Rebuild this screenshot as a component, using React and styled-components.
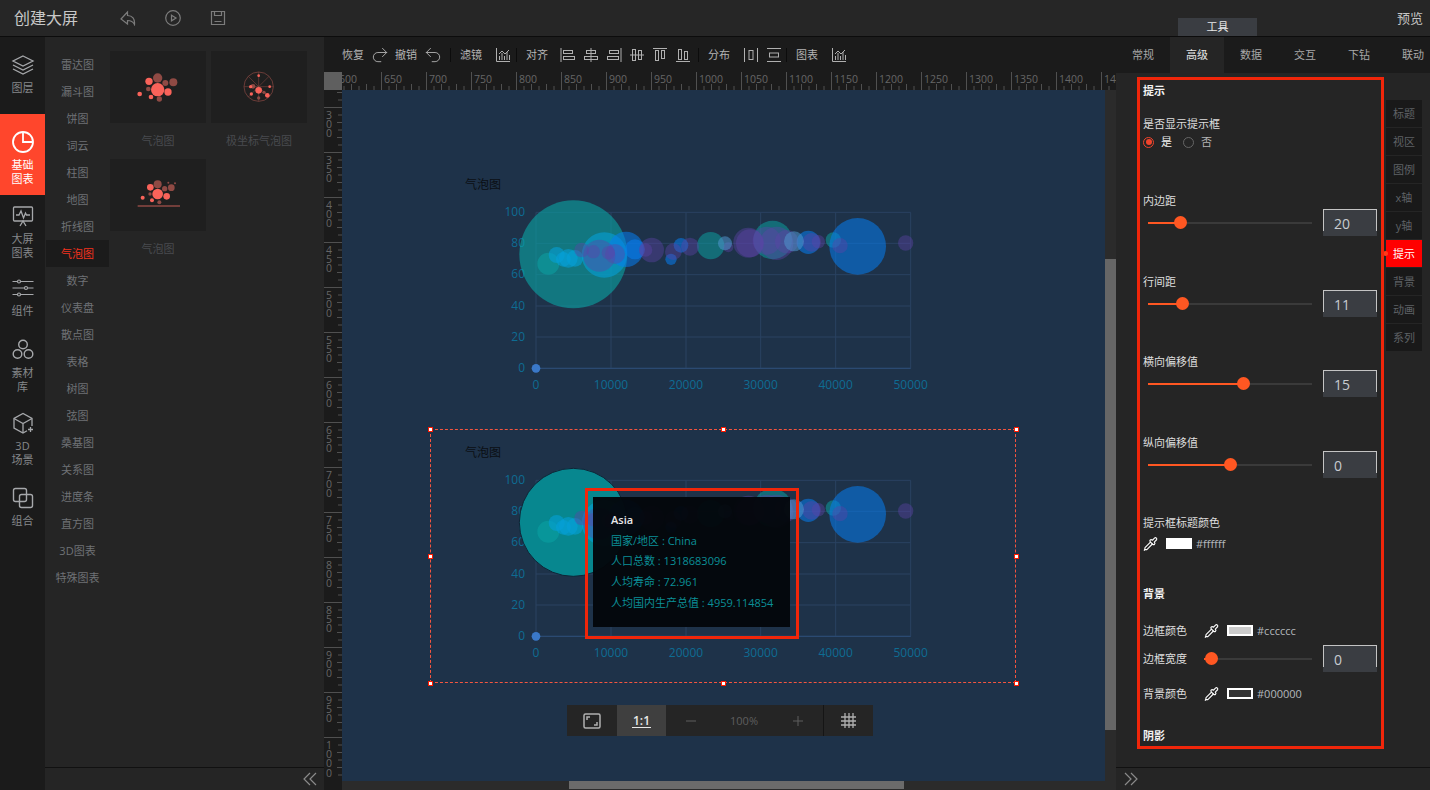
import React from 'react';
import styled, { createGlobalStyle } from 'styled-components';
import { Pipette, Undo2, Redo2 } from 'lucide-react';

const GlobalStyle = createGlobalStyle`
    html, body {
        margin: 0;
        height: 100%;
        overflow: hidden;
        background: #252525;
        font-family: "Open Sans", "Noto Sans CJK SC", sans-serif;
    }
    #root { height: 100%; }
    * { box-sizing: border-box; }
`;

const Page = styled.div`
    display: flex;
    flex-direction: column;
    width: 1430px;
    height: 790px;
    background: #252525;
`;

const TopBar = styled.header`
    display: flex;
    align-items: center;
    height: 37px;
    flex-shrink: 0;
    padding: 0 7px 0 14px;
    background: #262626;
    border-bottom: 1px solid #0c0c0c;
`;

const AppTitle = styled.div`
    font-size: 16px;
    line-height: 22px;
    width: 64px;
    color: #c8c8c8;
`;

const TopIcons = styled.div`
    display: flex;
    gap: 29px;
    margin-left: 42px;
    color: #7c7c7c;
`;

const ToolTab = styled.div`
    align-self: flex-end;
    width: 79px;
    height: 18px;
    margin-left: auto;
    font-size: 11px;
    line-height: 18px;
    text-align: center;
    color: #e8e8e8;
    background: #3a3d42;
`;

const Preview = styled.div`
    width: 26px;
    margin-left: 140px;
    font-size: 13px;
    line-height: 18px;
    color: #c4c4c4;
`;

const Main = styled.div`
    display: flex;
    flex: 1;
    min-height: 0;
`;

const Nav = styled.nav`
    width: 45px;
    flex-shrink: 0;
    background: #1b1b1b;
`;

const NavItem = styled.div`
    display: flex;
    flex-direction: column;
    align-items: center;
    gap: 4px;
    padding: ${p => p.$pad};
    font-size: 11px;
    line-height: 14px;
    text-align: center;
    color: ${p => (p.$active ? '#ffffff' : '#85878a')};
    background: ${p => (p.$active ? '#ff462c' : 'transparent')};
    svg { color: ${p => (p.$active ? '#ffffff' : '#a6a8ab')}; }
`;

const Library = styled.aside`
    display: flex;
    flex-direction: column;
    width: 279px;
    flex-shrink: 0;
`;

const LibraryBody = styled.div`
    display: flex;
    flex: 1;
    min-height: 0;
`;

const TypeList = styled.div`
    width: 64px;
    padding: 14px 0 0 1px;
`;

const TypeItem = styled.div`
    height: 27px;
    font-size: 11px;
    line-height: 27px;
    text-align: center;
    color: ${p => (p.$active ? '#f5321e' : '#6f7276')};
    background: ${p => (p.$active ? '#1b1b1b' : 'transparent')};
`;

const ChartGrid = styled.div`
    display: grid;
    grid-template-columns: 96px 96px;
    grid-auto-rows: 108px;
    column-gap: 5px;
    padding: 14px 0 0 1px;
`;

const ChartThumb = styled.div`
    svg {
        display: block;
        width: 96px;
        height: 72px;
        background: #1f1f1f;
    }
`;

const ThumbLabel = styled.div`
    font-size: 11px;
    line-height: 36px;
    text-align: center;
    color: #494b4f;
`;

const FootBar = styled.div`
    display: flex;
    align-items: center;
    justify-content: ${p => (p.$right ? 'flex-start' : 'flex-end')};
    height: 23px;
    flex-shrink: 0;
    padding: ${p => (p.$right ? '0 0 0 8px' : '0 7px 0 0')};
    color: #8a8a8a;
    border-top: 1px solid #111111;
`;

const Workspace = styled.main`
    display: flex;
    flex-direction: column;
    width: 792px;
    flex-shrink: 0;
    background: #1b1b1b;
`;

const Toolbar = styled.div`
    display: flex;
    align-items: center;
    gap: 8px;
    height: 35px;
    padding-left: 18px;
    color: #b0b0b0;
`;

const ToolText = styled.span`
    margin-left: ${p => p.$ml || 0}px;
    font-size: 11px;
    line-height: 14px;
    white-space: nowrap;
    color: #b4b4b4;
`;

const ToolIcon = styled.span`
    display: flex;
    align-items: center;
    justify-content: center;
    width: 15px;
    height: 16px;
    margin-left: ${p => p.$ml || 0}px;
    svg { display: block; flex-shrink: 0; }
`;

const ToolSep = styled.span`
    width: 1px;
    height: 14px;
    margin-left: ${p => p.$ml || 0}px;
    background: #0c0c0c;
`;

const RulerRow = styled.div`
    display: flex;
    height: 18px;
    flex-shrink: 0;
`;

const RulerCorner = styled.div`
    position: relative;
    z-index: 1;
    width: 18px;
    flex-shrink: 0;
    background: #5f5f5f;
`;

const CanvasRow = styled.div`
    display: flex;
    flex: 1;
    min-height: 0;
`;

const RulerSvg = styled.svg`
    display: block;
    flex-shrink: 0;
    background: #1b1b1b;
    text {
        font-size: 10.5px;
        fill: #666666;
    }
`;

const SideLabel = styled.text`
    writing-mode: vertical-rl;
    text-orientation: upright;
    letter-spacing: -4.8px;
`;

const Canvas = styled.div`
    position: relative;
    flex: 1;
    overflow: hidden;
    background: #1e3249;
`;

const ScrollTrackV = styled.div`
    width: 11px;
    flex-shrink: 0;
    padding-top: 169px;
    background: #2b2b2b;
`;

const ScrollThumbV = styled.div`
    height: 471px;
    background: #666666;
`;

const ScrollTrackH = styled.div`
    height: 9px;
    flex-shrink: 0;
    margin-left: 18px;
    padding-left: 227px;
    background: #2b2b2b;
`;

const ScrollThumbH = styled.div`
    width: 335px;
    height: 8px;
    background: #6b6b6b;
`;

const Widget = styled.div`
    position: absolute;
    left: 88px;
    top: ${p => p.$top}px;
    width: 586px;
    height: 254px;
    padding: 19px 0 0 35px;
`;

const WidgetTitle = styled.div`
    height: 10px;
    font-size: 12px;
    line-height: 10px;
    color: #0b0f14;
`;

const ChartSvg = styled.svg`
    display: block;
    width: 440px;
    height: 210px;
    margin-left: 35px;
    overflow: visible;
    text {
        font-size: 36px;
        fill: #0e6c93;
    }
`;

const SelectBox = styled.div`
    position: absolute;
    inset: 0;
    border: 1px dashed #f4553f;
`;

const Handle = styled.span`
    position: absolute;
    left: ${p => p.$x};
    top: ${p => p.$y};
    width: 5px;
    height: 5px;
    margin: -2px 0 0 -2px;
    background: #ffffff;
    border: 1.5px solid #ff1a00;
`;

const Tooltip = styled.div`
    position: absolute;
    left: 163px;
    top: 68px;
    width: 197px;
    height: 130px;
    padding: 13px 0 0 18px;
    background: rgba(3, 6, 10, 0.96);
`;

const TipTitle = styled.div`
    font-size: 11px;
    font-weight: 600;
    line-height: 20.7px;
    color: #e8e8e8;
`;

const TipLine = styled.div`
    font-size: 11px;
    line-height: 20.7px;
    white-space: nowrap;
    color: #0b8f97;
`;

const RedFrame = styled.div`
    position: absolute;
    left: ${p => p.$x}px;
    top: ${p => p.$y}px;
    width: ${p => p.$w}px;
    height: ${p => p.$h}px;
    border: 3px solid #f0260a;
    pointer-events: none;
`;

const ZoomBar = styled.div`
    position: absolute;
    left: 225px;
    top: 615px;
    display: flex;
    align-items: center;
    width: 306px;
    height: 31px;
    font-size: 11px;
    color: #5e5e5e;
    background: #252525;
`;

const ZoomCell = styled.div`
    display: flex;
    align-items: center;
    justify-content: center;
    width: ${p => p.$w}px;
    height: 31px;
    flex-shrink: 0;
    color: ${p => (p.$on ? '#e8e8e8' : p.$dim ? '#5e5e5e' : '#b0b0b0')};
    background: ${p => (p.$on ? '#3f3f3f' : 'transparent')};
    border-left: ${p => (p.$sep ? '1px solid #151515' : 'none')};
`;

const OneToOne = styled.span`
    font-size: 12px;
    font-weight: 600;
    line-height: 13px;
    border-bottom: 1px solid #e8e8e8;
    padding: 0 1px;
`;

const Panel = styled.section`
    position: relative;
    display: flex;
    flex-direction: column;
    flex: 1;
    min-width: 0;
`;

const Tabs = styled.div`
    display: flex;
    height: 36px;
    flex-shrink: 0;
    background: #1b1b1b;
`;

const Tab = styled.div`
    width: 54px;
    font-size: 11px;
    line-height: 36px;
    text-align: center;
    flex-shrink: 0;
    color: ${p => (p.$active ? '#e6e6e6' : '#a8a8a8')};
    background: ${p => (p.$active ? '#252525' : 'transparent')};
`;

const PanelBody = styled.div`
    display: flex;
    flex: 1;
    min-height: 0;
`;

const Form = styled.div`
    width: 270px;
    flex-shrink: 0;
    padding: 11px 0 0 27px;
    overflow: hidden;
`;

const Heading = styled.div`
    margin-top: ${p => p.$top || 0}px;
    font-size: 11px;
    font-weight: 700;
    line-height: 14px;
    color: #f2f2f2;
`;

const FieldLabel = styled.div`
    margin-top: ${p => p.$top || 0}px;
    font-size: 11px;
    line-height: 14px;
    color: #dedede;
`;

const Row = styled.div`
    display: flex;
    align-items: center;
    margin-top: ${p => p.$top || 0}px;
    min-height: 14px;
    font-size: 11px;
    line-height: 14px;
    color: #dedede;
`;

const RowLabel = styled.span`
    width: 61px;
    flex-shrink: 0;
`;

const Radio = styled.span`
    position: relative;
    width: 11px;
    height: 11px;
    margin-left: ${p => p.$ml || 0}px;
    border-radius: 50%;
    border: 1px solid ${p => (p.$on ? '#f0442c' : '#666666')};
    &::after {
        content: '';
        display: ${p => (p.$on ? 'block' : 'none')};
        position: absolute;
        inset: 1.5px;
        border-radius: 50%;
        background: #f0442c;
    }
`;

const RadioText = styled.span`
    margin-left: 7px;
    color: ${p => (p.$on ? '#f0f0f0' : '#b4b4b4')};
`;

const Slider = styled.div`
    position: relative;
    width: ${p => p.$w}px;
    height: 13px;
    margin-left: ${p => p.$ml || 0}px;
    flex-shrink: 0;
    background: linear-gradient(#3a3a3a, #3a3a3a) center / 100% 2px no-repeat;
    &::before {
        content: '';
        position: absolute;
        left: 0;
        top: 5.5px;
        width: ${p => p.$pos}px;
        height: 2px;
        background: #ff5722;
    }
    &::after {
        content: '';
        position: absolute;
        left: ${p => p.$pos - 6.5}px;
        top: 0;
        width: 13px;
        height: 13px;
        border-radius: 50%;
        background: #ff5722;
    }
`;

const NumberBox = styled.div`
    position: relative;
    width: 54px;
    height: 27px;
    margin-left: 11px;
    padding-left: 10px;
    font-size: 14px;
    line-height: 27px;
    color: #c8ccd0;
    background: #3a3d42;
    border: 1px solid #c4c4c4;
    border-bottom: none;
    &::after {
        content: '';
        position: absolute;
        left: -1px;
        right: -1px;
        bottom: 0;
        height: 5px;
        background: #3a3d42;
    }
`;

const Dropper = styled.span`
    display: flex;
    width: 15px;
    height: 15px;
    margin-left: ${p => p.$ml || 0}px;
    flex-shrink: 0;
    color: #ffffff;
`;

const Swatch = styled.span`
    width: 26px;
    height: 11px;
    margin-left: ${p => p.$ml || 8}px;
    flex-shrink: 0;
    background: ${p => p.$color};
    border: 2px solid #ffffff;
`;

const HexText = styled.span`
    margin-left: 4px;
    color: #b4b8bc;
`;

const SideTabs = styled.div`
    display: flex;
    flex-direction: column;
    gap: 1px;
    width: 36px;
    padding-top: 27px;
`;

const SideTab = styled.div`
    position: relative;
    height: 27px;
    font-size: 11px;
    line-height: 27px;
    text-align: center;
    color: ${p => (p.$active ? '#ffffff' : '#5f6266')};
    background: ${p => (p.$active ? '#ff0000' : '#191919')};
    &::before {
        content: '';
        display: ${p => (p.$active ? 'block' : 'none')};
        position: absolute;
        left: -3px;
        top: 11px;
        width: 5px;
        height: 5px;
        border-radius: 50%;
        background: #ff3a1a;
    }
`;

// ---------- icons ----------

const Svg = ({ size = 24, w, h, sw = 1.3, children }) => (
    <svg width={w || size} height={h || size} viewBox={`0 0 ${w || size} ${h || size}`} fill="none" stroke="currentColor" strokeWidth={sw}>
        {children}
    </svg>
);

const NavIcons = {
    layers: <Svg><path d="M12 3 22 8 12 13 2 8Z" /><path d="M2 12l10 5 10-5" /><path d="M2 16l10 5 10-5" /></Svg>,
    pie: <Svg sw={1.8}><circle cx="12" cy="12" r="10" /><path d="M12 2v10h10" /></Svg>,
    screen: (
        <Svg>
            <rect x="2.5" y="3" width="19" height="14" rx="1" />
            <path d="M5 11h3l2-4 2.5 7 2-5 1 2h3.5" />
            <path d="M9 22l3-5 3 5" />
        </Svg>
    ),
    sliders: (
        <Svg sw={1.2}>
            <path d="M1.5 5.5h5M9.5 5.5h13M1.5 12h12M16.500 12h6M1.500 18.500h5M9.500 18.500h13" />
            <circle cx="8" cy="5.500" r="1.500" /><circle cx="15" cy="12" r="1.500" /><circle cx="8" cy="18.500" r="1.500" />
        </Svg>
    ),
    hex: <Svg sw={1.4}><circle cx="12" cy="6.500" r="4.300" /><circle cx="6.500" cy="16" r="4.300" /><circle cx="17.500" cy="16" r="4.300" /></Svg>,
    cube: (
        <Svg>
            <path d="M21 15V7.500L12 2.500 3 7.500v9.500l9 5 4-2.200" />
            <path d="M3 7.500l9 5 9-5M12 12.500V22" />
            <path d="M17 18.500h5M19.500 16v5" />
        </Svg>
    ),
    combine: (
        <Svg sw={1.4}>
            <rect x="2.500" y="2.500" width="13" height="13" rx="2" />
            <rect x="8.500" y="8.500" width="13" height="13" rx="2" />
        </Svg>
    ),
};

const ChartMini = () => (
    <Svg size={16} sw={1}>
        <path d="M1.500 1v13.500H15" />
        <path d="M4.500 13V9M7 13V6M9.500 13V9M12 13V5M14.500 13V8" />
        <path d="M4 7l3-3 3 3 4-4" />
    </Svg>
);

const alignIcons = [
    { l: 'M1 1v14', r: [[3, 3, 10, 4], [3, 9, 12, 4]] },
    { l: 'M8 1v14', r: [[3, 3, 10, 4], [1, 9, 14, 4]] },
    { l: 'M15 1v14', r: [[3, 3, 10, 4], [1, 9, 12, 4]] },
    { l: 'M1 8h14', r: [[3, 2, 4, 12], [9, 3, 4, 10]] },
    { l: 'M1 1.500h14', r: [[3, 3, 4, 11], [9, 3, 4, 9]] },
    { l: 'M1 14.500h14', r: [[3, 2, 4, 11], [9, 4, 4, 9]] },
];

const distribute = [
    { l: 'M1.500 1v14M14.500 1v14', r: [[5.500, 3, 5, 10]] },
    { l: 'M1 1.500h14M1 14.500h14', r: [[3, 5.500, 10, 5]] },
];

const BoxIcon = ({ l, r }) => (
    <Svg size={16} sw={1}>
        <path d={l} />
        {r.map((b, i) => <rect key={i} x={b[0] + 0.5} y={b[1] + 0.5} width={b[2] - 1} height={b[3] - 1} />)}
    </Svg>
);

const Chevrons = ({ right }) => (
    <svg width="14" height="14" viewBox="0 0 14 14" fill="none" stroke="currentColor" strokeWidth="1.200" style={right ? { transform: 'scaleX(-1)' } : undefined}>
        <path d="M7 1 1 7l6 6M13 1 7 7l6 6" />
    </svg>
);

const Dim = '#8f4a44';
const Lit = '#f9635a';

const Dots = ({ lit, dim }) => (
    <g stroke="none">
        {dim.map((c, i) => <circle key={i} cx={c[0]} cy={c[1]} r={c[2]} fill={Dim} />)}
        {lit.map((c, i) => <circle key={i} cx={c[0]} cy={c[1]} r={c[2]} fill={Lit} />)}
    </g>
);

const thumbs = [
    {
        label: '气泡图',
        box: '30 34 288 216',
        art: (
            <Dots
                lit={[[173, 150, 20], [147, 125, 11], [204, 157, 11], [153, 172, 7], [119, 163, 7]]}
                dim={[[173, 115, 14], [196, 130, 9], [220, 128, 12], [145, 148, 7], [178, 178, 8]]}
            />
        ),
    },
    {
        label: '极坐标气泡图',
        box: '334 34 288 216',
        art: (
            <>
                <circle cx="477" cy="141" r="44" fill="none" stroke={Dim} strokeWidth="2" />
                <path d="M477 97v88M433 141h88M446 110l62 62M508 110l-62 62" stroke={Dim} strokeWidth="1.500" />
                <Dots
                    lit={[[477, 152, 10], [477, 108, 4], [510, 141, 4], [453, 141, 5], [503, 167, 7], [455, 163, 5]]}
                    dim={[[477, 175, 5], [460, 140, 7], [493, 158, 5]]}
                />
            </>
        ),
    },
    {
        label: '气泡图',
        box: '30 358 288 216',
        art: (
            <>
                <path d="M113 499h127" stroke={Dim} strokeWidth="4" />
                <Dots
                    lit={[[173, 463, 16], [151, 443, 10], [200, 470, 10], [156, 482, 6], [128, 474, 6]]}
                    dim={[[173, 434, 12], [194, 447, 8], [214, 444, 10], [150, 463, 5], [178, 488, 6], [205, 429, 3], [225, 431, 3]]}
                />
            </>
        ),
    },
];

// ---------- rulers ----------

const TopRuler = () => {
    const ticks = [];
    for (let i = 0; i < 105; i++) ticks.push(i);
    return (
        <RulerSvg width="774" height="18">
            {ticks.map(i => {
                const x = -6 + i * 7.5;
                if (i % 6 === 0) return <path key={i} d={`M${x + 0.5} 0V18`} stroke="#505050" />;
                return <path key={i} d={`M${x + 0.5} ${i % 2 ? 14 : 12}V18`} stroke="#505050" />;
            })}
            {Array.from({ length: 18 }, (_, k) => (
                <text key={k} x={-3 + k * 45} y="11">{600 + k * 50}</text>
            ))}
        </RulerSvg>
    );
};

const SideRuler = () => {
    const ticks = [];
    for (let i = 0; i < 93; i++) ticks.push(i);
    return (
        <RulerSvg width="18" height="691">
            {ticks.map(i => {
                const y = 2 + i * 7.5;
                if ((i - 2) % 6 === 0) return <path key={i} d={`M0 ${y + 0.5}H18`} stroke="#505050" />;
                return <path key={i} d={`M${i % 2 ? 14 : 13} ${y + 0.5}H18`} stroke="#505050" />;
            })}
            {Array.from({ length: 15 }, (_, k) => (
                <SideLabel key={k} x="5" y={17 + k * 45 + 1}>{300 + k * 50}</SideLabel>
            ))}
        </RulerSvg>
    );
};

// ---------- bubble chart ----------

const bubbleColors = {
    teal: 'rgba(10,165,165,0.5)',
    cyan: 'rgba(5,160,215,0.6)',
    blue: 'rgba(5,125,240,0.55)',
    purple: 'rgba(92,66,168,0.42)',
    pale: 'rgba(80,150,205,0.55)',
};

const bubbles = [
    ['teal', 145, 221, 33], ['teal', 632, 167, 41], ['teal', 818, 150, 58], ['teal', 1000, 150, 23],
    ['cyan', 170, 195, 24], ['cyan', 190, 208, 22], ['cyan', 205, 205, 28], ['cyan', 225, 205, 25], ['cyan', 313, 195, 68],
    ['blue', 378, 178, 53], ['blue', 405, 178, 30], ['blue', 1073, 169, 85], ['blue', 925, 157, 35], ['blue', 543, 166, 22], ['blue', 513, 208, 17],
    ['purple', 298, 197, 48], ['purple', 455, 180, 37], ['purple', 570, 170, 27], ['purple', 745, 158, 45], ['purple', 750, 160, 42],
    ['purple', 800, 152, 42], ['purple', 830, 160, 50], ['purple', 860, 155, 35], ['purple', 935, 157, 28], ['purple', 955, 155, 20], ['purple', 1217, 159, 23],
    ['purple', 1020, 167, 23], ['purple', 520, 185, 25], ['purple', 245, 180, 22], ['purple', 280, 185, 20], ['purple', 345, 192, 30],
    ['purple', 325, 188, 20], ['purple', 437, 180, 20], ['purple', 685, 172, 15],
    ['pale', 882, 154, 30], ['pale', 675, 160, 21],
];

const gridX = [108, 333, 558, 782, 1007, 1232];
const gridY = [67, 160, 254, 348, 441, 535];

const BubbleChart = ({ focused }) => (
    <ChartSvg viewBox="0 0 1320 630">
        <g stroke="#2a4262" strokeWidth="3" fill="none">
            {gridX.map(x => <path key={x} d={`M${x} 67V535`} />)}
            {gridY.map(y => <path key={y} d={`M108 ${y}H1232`} />)}
        </g>
        <path d="M108 535H1232" stroke="#2b4a72" strokeWidth="4" />
        {[0, 20, 40, 60, 80, 100].map((v, i) => (
            <text key={v} x="75" y={gridY[5 - i] + 11} textAnchor="end">{v}</text>
        ))}
        {[0, 10000, 20000, 30000, 40000, 50000].map((v, i) => (
            <text key={v} x={gridX[i]} y="596" textAnchor="middle">{v}</text>
        ))}
        <circle
            cx="220"
            cy="193"
            r="162"
            fill={focused ? '#07878f' : 'rgba(10,165,165,0.6)'}
            stroke={focused ? '#0e2436' : 'none'}
            strokeWidth="3"
        />
        {bubbles.map((b, i) => <circle key={i} cx={b[1]} cy={b[2]} r={b[3]} fill={bubbleColors[b[0]]} />)}
        <circle cx="108" cy="535" r="13" fill="#3a78c8" />
    </ChartSvg>
);

// ---------- data ----------

const navItems = [
    { icon: 'layers', text: ['图层'], pad: '16px 0 19px' },
    { icon: 'pie', text: ['基础', '图表'], pad: '16px 0 9px', active: true },
    { icon: 'screen', text: ['大屏', '图表'], pad: '9px 0 8px' },
    { icon: 'sliders', text: ['组件'], pad: '8px 0 10px' },
    { icon: 'hex', text: ['素材', '库'], pad: '10px 0 8px' },
    { icon: 'cube', text: ['3D', '场景'], pad: '9px 0 10px' },
    { icon: 'combine', text: ['组合'], pad: '9px 0 0' },
];

const chartTypes = ['雷达图', '漏斗图', '饼图', '词云', '柱图', '地图', '折线图', '气泡图', '数字', '仪表盘', '散点图', '表格', '树图', '弦图', '桑基图', '关系图', '进度条', '直方图', '3D图表', '特殊图表'];
const tabs = ['常规', '高级', '数据', '交互', '下钻', '联动'];
const sideTabs = ['标题', '视区', '图例', 'x轴', 'y轴', '提示', '背景', '动画', '系列'];
const handles = [['0', '0'], ['50%', '0'], ['100%', '0'], ['0', '50%'], ['100%', '50%'], ['0', '100%'], ['50%', '100%'], ['100%', '100%']];

const sliderFields = [
    { label: '内边距', top: 45, pos: 32, value: 20 },
    { label: '行间距', top: 39, pos: 34, value: 11 },
    { label: '横向偏移值', top: 38, pos: 95, value: 15 },
    { label: '纵向偏移值', top: 39, pos: 82, value: 0 },
];

const Drop = ({ ml }) => (
    <Dropper $ml={ml}><Pipette size={16} strokeWidth={1.700} /></Dropper>
);

export default function App() {
    return (
        <Page>
            <GlobalStyle />
            <TopBar>
                <AppTitle>创建大屏</AppTitle>
                <TopIcons>
                    <Svg size={16} sw={1.200}><path d="M7.500 2 1 9l6.500 5v-3.500c3 0 5.500 1 7 4 .5-5.500-2-9-7-9Z" /></Svg>
                    <Svg size={16} sw={1.200}><circle cx="8" cy="8" r="7.300" /><path d="M6.500 5.200 11 8l-4.500 2.800Z" /></Svg>
                    <Svg size={16} sw={1.200}><path d="M1.500 1.500h13v13h-13Z" /><path d="M4.500 1.500v4h7v-4M4.500 11.500h7" /></Svg>
                </TopIcons>
                <ToolTab>工具</ToolTab>
                <Preview>预览</Preview>
            </TopBar>
            <Main>
                <Nav>
                    {navItems.map(item => (
                        <NavItem key={item.icon} $active={item.active} $pad={item.pad}>
                            {NavIcons[item.icon]}
                            <div>{item.text.map(t => <div key={t}>{t}</div>)}</div>
                        </NavItem>
                    ))}
                </Nav>
                <Library>
                    <LibraryBody>
                        <TypeList>
                            {chartTypes.map(t => <TypeItem key={t} $active={t === '气泡图'}>{t}</TypeItem>)}
                        </TypeList>
                        <ChartGrid>
                            {thumbs.map((t, i) => (
                                <ChartThumb key={i}>
                                    <svg viewBox={t.box}>{t.art}</svg>
                                    <ThumbLabel>{t.label}</ThumbLabel>
                                </ChartThumb>
                            ))}
                        </ChartGrid>
                    </LibraryBody>
                    <FootBar><Chevrons /></FootBar>
                </Library>
                <Workspace>
                    <Toolbar>
                        <ToolText>恢复</ToolText>
                        <ToolIcon><Redo2 size={20} strokeWidth={1.100} /></ToolIcon>
                        <ToolText>撤销</ToolText>
                        <ToolIcon><Undo2 size={20} strokeWidth={1.100} /></ToolIcon>
                        <ToolSep $ml={2} />
                        <ToolText $ml={1}>滤镜</ToolText>
                        <ToolIcon $ml={5}><ChartMini /></ToolIcon>
                        <ToolSep $ml={-2} />
                        <ToolText $ml={1}>对齐</ToolText>
                        {alignIcons.map((a, i) => <ToolIcon key={i} $ml={i === 0 ? 4 : 0}><BoxIcon {...a} /></ToolIcon>)}
                        <ToolSep />
                        <ToolText $ml={1}>分布</ToolText>
                        {distribute.map((a, i) => <ToolIcon key={i} $ml={i === 0 ? 5 : 0}><BoxIcon {...a} /></ToolIcon>)}
                        <ToolSep $ml={-3} />
                        <ToolText $ml={1}>图表</ToolText>
                        <ToolIcon $ml={5}><ChartMini /></ToolIcon>
                    </Toolbar>
                    <RulerRow>
                        <RulerCorner />
                        <TopRuler />
                    </RulerRow>
                    <CanvasRow>
                        <SideRuler />
                        <Canvas>
                            <Widget $top={71}>
                                <WidgetTitle>气泡图</WidgetTitle>
                                <BubbleChart />
                            </Widget>
                            <Widget $top={339}>
                                <WidgetTitle>气泡图</WidgetTitle>
                                <BubbleChart focused />
                                <SelectBox />
                                {handles.map(h => <Handle key={h.join()} $x={h[0]} $y={h[1]} />)}
                                <Tooltip>
                                    <TipTitle>Asia</TipTitle>
                                    <TipLine>国家/地区 : China</TipLine>
                                    <TipLine>人口总数 : 1318683096</TipLine>
                                    <TipLine>人均寿命 : 72.961</TipLine>
                                    <TipLine>人均国内生产总值 : 4959.114854</TipLine>
                                </Tooltip>
                                <RedFrame $x={155} $y={59} $w={214} $h={151} />
                            </Widget>
                            <ZoomBar>
                                <ZoomCell $w={50}>
                                    <Svg w={18} h={16} sw={1.500}>
                                        <rect x="1" y="1" width="16" height="14" rx="1.500" />
                                        <path d="M4 7V4h3M14 9v3h-3" />
                                    </Svg>
                                </ZoomCell>
                                <ZoomCell $w={49} $on><OneToOne>1:1</OneToOne></ZoomCell>
                                <ZoomCell $w={49} $dim><Svg size={10} sw={1}><path d="M0 5h10" /></Svg></ZoomCell>
                                <ZoomCell $w={58} $dim>100%</ZoomCell>
                                <ZoomCell $w={50} $dim><Svg size={10} sw={1}><path d="M0 5h10M5 0v10" /></Svg></ZoomCell>
                                <ZoomCell $w={50} $sep>
                                    <Svg size={15} sw={1.300}><path d="M0 4h15M0 8h15M0 12h15M4 0v15M8 0v15M12 0v15" /></Svg>
                                </ZoomCell>
                            </ZoomBar>
                        </Canvas>
                        <ScrollTrackV><ScrollThumbV /></ScrollTrackV>
                    </CanvasRow>
                    <ScrollTrackH><ScrollThumbH /></ScrollTrackH>
                </Workspace>
                <Panel>
                    <Tabs>
                        {tabs.map(t => <Tab key={t} $active={t === '高级'}>{t}</Tab>)}
                    </Tabs>
                    <PanelBody>
                        <Form>
                            <Heading>提示</Heading>
                            <FieldLabel $top={19}>是否显示提示框</FieldLabel>
                            <Row $top={4}>
                                <Radio $on />
                                <RadioText $on>是</RadioText>
                                <Radio $ml={11} />
                                <RadioText>否</RadioText>
                            </Row>
                            {sliderFields.map(f => (
                                <React.Fragment key={f.label}>
                                    <FieldLabel $top={f.top}>{f.label}</FieldLabel>
                                    <Row $top={1}>
                                        <Slider $ml={5} $w={164} $pos={f.pos} />
                                        <NumberBox>{f.value}</NumberBox>
                                    </Row>
                                </React.Fragment>
                            ))}
                            <FieldLabel $top={38}>提示框标题颜色</FieldLabel>
                            <Row $top={6}>
                                <Drop />
                                <Swatch $ml={8} $color="#ffffff" />
                                <HexText>#ffffff</HexText>
                            </Row>
                            <Heading $top={36}>背景</Heading>
                            <Row $top={22}>
                                <RowLabel>边框颜色</RowLabel>
                                <Drop $ml={2} />
                                <Swatch $color="#cccccc" />
                                <HexText>#cccccc</HexText>
                            </Row>
                            <Row $top={7}>
                                <RowLabel>边框宽度</RowLabel>
                                <Slider $w={108} $pos={7} />
                                <NumberBox>0</NumberBox>
                            </Row>
                            <Row $top={14}>
                                <RowLabel>背景颜色</RowLabel>
                                <Drop $ml={2} />
                                <Swatch $color="#333333" />
                                <HexText>#000000</HexText>
                            </Row>
                            <Heading $top={28}>阴影</Heading>
                        </Form>
                        <SideTabs>
                            {sideTabs.map(t => <SideTab key={t} $active={t === '提示'}>{t}</SideTab>)}
                        </SideTabs>
                    </PanelBody>
                    <FootBar $right><Chevrons right /></FootBar>
                    <RedFrame $x={21} $y={40} $w={247} $h={672} />
                </Panel>
            </Main>
        </Page>
    );
}
